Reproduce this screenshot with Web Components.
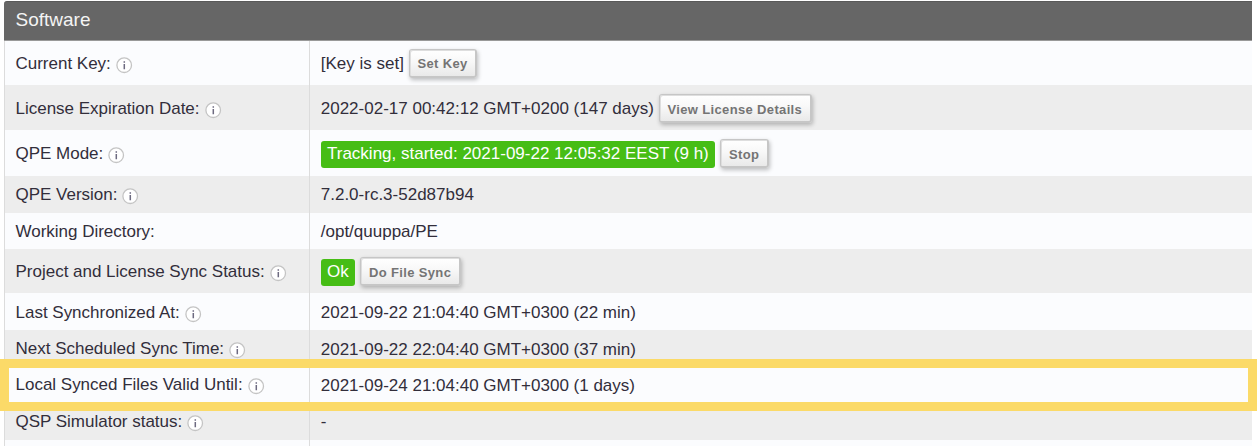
<!DOCTYPE html>
<html lang="en">
<head>
<meta charset="utf-8">
<title>Software</title>
<style>
html,body{margin:0;height:446px;overflow:hidden;background:#fff}
body{font:17px/20px "Liberation Sans",Arial,sans-serif;color:#322e3b}
</style>
</head>
<body>
<software-panel></software-panel>
<script>
class InfoIcon extends HTMLElement{
  connectedCallback(){
    this.attachShadow({mode:'open'}).innerHTML=`<style>:host{display:block;flex:none;width:17px;height:17px}svg{display:block}</style>
    <svg width="17" height="17" viewBox="0 0 17 17"><circle cx="8.2" cy="8.2" r="7.3" fill="#fff" stroke="#c4c4c4" stroke-width="1.3"/><path d="M8.3 4.3v1.5M8.3 7v5.2" stroke="#6d6a80" stroke-width="1.5"/></svg>`;
  }
}
customElements.define('info-icon',InfoIcon);

class ActionButton extends HTMLElement{
  connectedCallback(){
    this.attachShadow({mode:'open'}).innerHTML=`<style>
    :host{display:block;flex:none}
    button{box-sizing:border-box;display:block;width:100%;height:29px;margin:0;padding:var(--bt,2px) 0 0 8px;text-align:left;border:1.5px solid #c6c6c6;border-width:1px 2px 2px 1px;border-radius:3px;background:linear-gradient(#fff,#f8f8f8 45%,#e9e9e9);box-shadow:inset 1px 1px 0 #dedede,1px 2px 4px rgba(0,0,0,.25);color:#747474;font:bold 13px/22px "Liberation Sans",Arial,sans-serif;letter-spacing:.35px;white-space:nowrap}
    </style><button><slot></slot></button>`;
  }
}
customElements.define('action-button',ActionButton);

class StatusPill extends HTMLElement{
  connectedCallback(){
    this.attachShadow({mode:'open'}).innerHTML=`<style>
    :host{display:block;flex:none;box-sizing:border-box;height:27px;padding:3px 0 0 6px;border-radius:3px;background:#46bd15;color:#fff;white-space:nowrap}
    </style><slot></slot>`;
  }
}
customElements.define('status-pill',StatusPill);

class SettingRow extends HTMLElement{
  connectedCallback(){
    this.attachShadow({mode:'open'}).innerHTML=`<style>
    :host{display:grid;grid-template-columns:305px 1fr;box-sizing:border-box;background:#fbfcfe}
    :host([alt]){background:#ededed}
    div{display:flex;align-items:flex-start;box-sizing:border-box;white-space:nowrap;min-height:0}
    .label{padding:var(--lt) 0 0 11px;border-left:1px solid #dcdcdc}
    .value{padding:var(--vt) 0 0 11px;border-left:1px solid #dcdcdc}
    </style><div class="label"><slot name="label"></slot></div><div class="value"><slot></slot></div>`;
  }
}
customElements.define('setting-row',SettingRow);

class SoftwarePanel extends HTMLElement{
  connectedCallback(){
    // h: row height; lt / vt: label and value inset; ix: icon column
    // button: [text, left edge, width, top offset, text inset]
    const rows=[
      {h:44,lt:12,vt:12,ix:116,label:'Current Key:',value:'[Key is set]',button:['Set Key',408.5,68,-5,2]},
      {h:45,lt:13,vt:13,ix:205,label:'License Expiration Date:',value:'2022-02-17 00:42:12 GMT+0200 (147 days)',button:['View License Details',658.5,153,-5,3]},
      {h:46,lt:13,vt:11,ix:108,label:'QPE Mode:',pill:['Tracking, started: 2021-09-22 12:05:32 EEST (9 h)',394],button:['Stop',720,49,-2,3]},
      {h:37,lt:8,vt:8,ix:122,label:'QPE Version:',value:'7.2.0-rc.3-52d87b94'},
      {h:36,lt:8,vt:8,label:'Working Directory:',value:'/opt/quuppa/PE'},
      {h:44,lt:12,vt:10,ix:270,label:'Project and License Sync Status:',pill:['Ok',34],button:['Do File Sync',360,101,-2,3]},
      {h:37,lt:9,vt:9,ix:185,label:'Last Synchronized At:',value:'2021-09-22 21:04:40 GMT+0300 (22 min)'},
      {h:37,lt:8,vt:9,ix:229,label:'Next Scheduled Sync Time:',value:'2021-09-22 22:04:40 GMT+0300 (37 min)'},
      {h:36,lt:7,vt:8,ix:248,label:'Local Synced Files Valid Until:',value:'2021-09-24 21:04:40 GMT+0300 (1 days)'},
      {h:37,lt:8,vt:8,ix:187,label:'QSP Simulator status:',value:'-'},
      {h:6,lt:0,vt:0,label:'',value:''}
    ];
    const html=rows.map((r,i)=>{
      const lw=r.ix?`width:${r.ix-15.5}px`:'';
      const vw=r.button&&!r.pill?`width:${r.button[1]-320.75}px`:'';
      return `<setting-row ${i%2?'alt':''} style="height:${r.h}px;--lt:${r.lt}px;--vt:${r.vt}px">
      <span slot="label" class="text" style="${lw}">${r.label}</span>${r.ix?'<info-icon slot="label" class="icon"></info-icon>':''}
      ${r.pill?`<status-pill style="width:${r.pill[1]}px">${r.pill[0]}</status-pill>`:`<span class="text value" style="${vw}">${r.value}</span>`}
      ${r.button?`<action-button style="--bt:${r.button[4]}px;width:${r.button[2]}px;margin-top:${r.button[3]+(r.pill?0:1)}px;${r.pill?`margin-left:${r.button[1]-321-r.pill[1]}px`:''}">${r.button[0]}</action-button>`:''}
      </setting-row>`;
    }).join('');
    this.attachShadow({mode:'open'}).innerHTML=`<style>
    :host{display:block;position:relative;width:1257px;height:446px;overflow:hidden}
    main{margin:1px 5px 0 4px}
    header{box-sizing:border-box;height:40px;padding:8px 0 0 11.5px;border-bottom:1px solid #999;border-top:1px solid #595959;border-radius:3px 0 0 0;background:#666;color:#f4f4f4;font-size:19px}
    .text{display:block;flex:none;white-space:nowrap;margin:1px 0 0 -.5px;letter-spacing:-.01px}
    .text.value{margin-left:-.25px;letter-spacing:0}
    .icon{margin-top:4px}
    .highlight{position:absolute;left:0;top:359px;width:1257px;height:52px;box-sizing:border-box;border:9px solid #fbda68;pointer-events:none}
    </style><main><header>Software</header>${html}</main><div class="highlight"></div>`;
  }
}
customElements.define('software-panel',SoftwarePanel);
</script>
</body>
</html>
